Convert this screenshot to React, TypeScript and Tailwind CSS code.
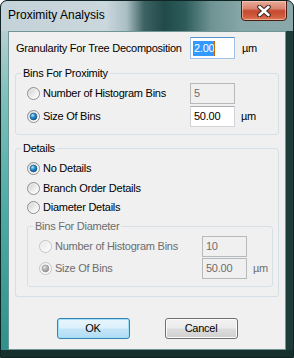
import React from 'react'

type RadioProps = { checked?: boolean; disabled?: boolean }

function Radio({ checked, disabled }: RadioProps) {
  const id = `${checked ? 'c' : 'u'}${disabled ? 'd' : 'e'}`
  return (
    <svg width="13" height="13" viewBox="0 0 13 13" className="shrink-0">
      <defs>
        <linearGradient id={`rf-${id}`} x1="0" y1="0" x2="1" y2="1">
          <stop offset="0" stopColor={disabled ? '#e6e6e6' : '#c9c9c9'} />
          <stop offset="0.6" stopColor={disabled ? '#f4f4f4' : '#f0f0f0'} />
          <stop offset="1" stopColor="#ffffff" />
        </linearGradient>
        <radialGradient id={`rd-${id}`} cx="0.35" cy="0.3" r="0.8">
          <stop offset="0" stopColor={disabled ? '#e8e8e8' : '#b9ecff'} />
          <stop offset="0.45" stopColor={disabled ? '#b4b4b4' : '#2a8fd0'} />
          <stop offset="1" stopColor={disabled ? '#8c8c8c' : '#0b4d82'} />
        </radialGradient>
      </defs>
      <circle cx="6.5" cy="6.5" r="6" fill={`url(#rf-${id})`} stroke={disabled ? '#c4c4c4' : '#8e8f8f'} />
      <circle cx="6.5" cy="6.5" r="4.7" fill="none" stroke="#ffffff" strokeOpacity="0.5" />
      {checked && (
        <circle cx="6.5" cy="6.5" r="3.4" fill={`url(#rd-${id})`} stroke={disabled ? '#9a9a9a' : '#1c5a89'} strokeWidth="0.8" />
      )}
    </svg>
  )
}

function Field({ value, disabled }: { value: string; disabled?: boolean }) {
  return (
    <div
      className={
        disabled
          ? 'w-[45px] h-full flex items-center px-[3px] border border-[#b7babd] bg-[#f0f0f0] text-[#6d6d6d]'
          : 'w-[45px] h-full flex items-center px-[3px] border border-[#d0d4d8] border-t-[#abadb3] bg-white text-black'
      }
    >
      {value}
    </div>
  )
}

function Group({ title, className, children }: { title: string; className?: string; children: React.ReactNode }) {
  return (
    <div className={`relative border border-[#d5dfe5] rounded-[3px] ${className ?? ''}`}>
      <span className="absolute left-[5px] -top-[8px] px-[2px] bg-[#f0f0f0] leading-[14px] whitespace-nowrap">{title}</span>
      {children}
    </div>
  )
}

function Row({ label, checked, disabled, value, unit, inset }: {
  label: string
  checked?: boolean
  disabled?: boolean
  value: string
  unit?: boolean
  inset?: boolean
}) {
  return (
    <div className="flex items-center h-[21px] pl-[11px]">
      <div className={`w-[163px] flex items-center gap-[3px] ${disabled ? 'text-[#6d6d6d]' : ''}`}>
        <Radio checked={checked} disabled={disabled} />
        <span className="whitespace-nowrap">{label}</span>
      </div>
      <Field value={value} disabled={disabled || (!checked && !inset)} />
      {unit && <span className="ml-[6px]">µm</span>}
    </div>
  )
}

export default function App() {
  return (
    <div className="w-[294px] h-[358px] flex flex-col border border-[#0f2423] rounded-t-[7px] overflow-hidden bg-[#1d3b39] font-['Liberation_Sans',Arial,sans-serif] text-[11px] tracking-[-0.25px] text-black">
      {/* title bar */}
      <div className="h-[30px] shrink-0 flex items-start bg-[linear-gradient(90deg,#c4d2d9_0%,#cad7dd_36%,#a9bec3_43%,#3d6263_49%,#214a4a_56%,#2d5c5b_63%,#6f9394_72%,#86a6a7_82%,#8aa8a9_100%)]">
        <span className="ml-[7px] mt-[7px] text-[12px] leading-[14px] tracking-normal text-black">Proximity Analysis</span>
        <div className="ml-auto mr-[6px] -mt-[1px] w-[46px] h-[21px] rounded-b-[4px] border border-[#4a1c16] flex items-center justify-center bg-[linear-gradient(180deg,#e9ab9a_0%,#d98470_40%,#c54a30_52%,#cf5b3c_80%,#e07a55_100%)] shadow-[inset_0_0_0_1px_rgba(255,220,200,0.5)]">
          <svg width="16" height="12" viewBox="0 0 16 12">
            <path d="M3.5 2 L12.5 10 M12.5 2 L3.5 10" stroke="#3a2522" strokeWidth="4.6" strokeLinecap="round" />
            <path d="M3.5 2 L12.5 10 M12.5 2 L3.5 10" stroke="#ffffff" strokeWidth="2.6" strokeLinecap="round" />
          </svg>
        </div>
      </div>

      <div className="flex flex-1">
        <div className="w-[7px] bg-[linear-gradient(180deg,#b9ced2_0%,#7fc1bb_20%,#4cada6_55%,#2f918b_100%)]" />
        {/* client area */}
        <div className="w-[278px] border border-[#6f9594] bg-[#f0f0f0] flex flex-col px-[6px]">
          <div className="mt-[5px] h-[22px] flex items-center">
            <span className="w-[175px] pl-[1px] whitespace-nowrap">Granularity For Tree Decomposition</span>
            <div className="w-[45px] h-full flex items-center px-[2px] border border-[#9fc3e6] border-t-[#5692c9] bg-white">
              <span className="bg-[#3399ff] text-white leading-[15px] pl-[1px]">2.00</span>
              <span className="w-[1px] h-[15px] bg-[#cc6600]" />
            </div>
            <span className="ml-[7px]">µm</span>
          </div>

          <Group title="Bins For Proximity" className="mt-[14px] pt-[9px] pb-[7px] flex flex-col gap-[2px]">
            <Row label="Number of Histogram Bins" value="5" />
            <Row label="Size Of Bins" checked value="50.00" unit />
          </Group>

          <Group title="Details" className="mt-[13px] pt-[9px] pb-[9px] flex flex-col">
            <div className="h-[20px] flex items-center gap-[3px] pl-[11px]">
              <Radio checked />
              <span>No Details</span>
            </div>
            <div className="h-[20px] flex items-center gap-[3px] pl-[11px]">
              <Radio />
              <span>Branch Order Details</span>
            </div>
            <div className="h-[19px] flex items-center gap-[3px] pl-[11px]">
              <Radio />
              <span>Diameter Details</span>
            </div>
            <Group title="Bins For Diameter" className="mt-[9px] ml-[11px] mr-[5px] pt-[9px] pb-[7px] flex flex-col gap-[1px] text-[#6d6d6d]">
              <Row label="Number of Histogram Bins" value="10" disabled />
              <Row label="Size Of Bins" checked value="50.00" unit disabled />
            </Group>
          </Group>

          <div className="mt-[21px] flex justify-center gap-[35px]">
            <button className="w-[73px] h-[21px] rounded-[3px] border border-[#3c7fb1] bg-[linear-gradient(180deg,#e9f6fd_0%,#dbf0fb_48%,#c4e5f8_52%,#b2dcf5_100%)] shadow-[inset_0_0_0_1px_#9fe0fb] text-[11px] leading-[19px]">
              OK
            </button>
            <button className="w-[73px] h-[21px] rounded-[3px] border border-[#707070] bg-[linear-gradient(180deg,#f2f2f2_0%,#ebebeb_48%,#dddddd_52%,#cfcfcf_100%)] shadow-[inset_0_0_0_1px_#fbfbfb] text-[11px] leading-[19px]">
              Cancel
            </button>
          </div>
        </div>
        <div className="w-[7px] bg-[#1e3c3a]" />
      </div>
      <div className="h-[7px] shrink-0 bg-[#17302e]" />
    </div>
  )
}
